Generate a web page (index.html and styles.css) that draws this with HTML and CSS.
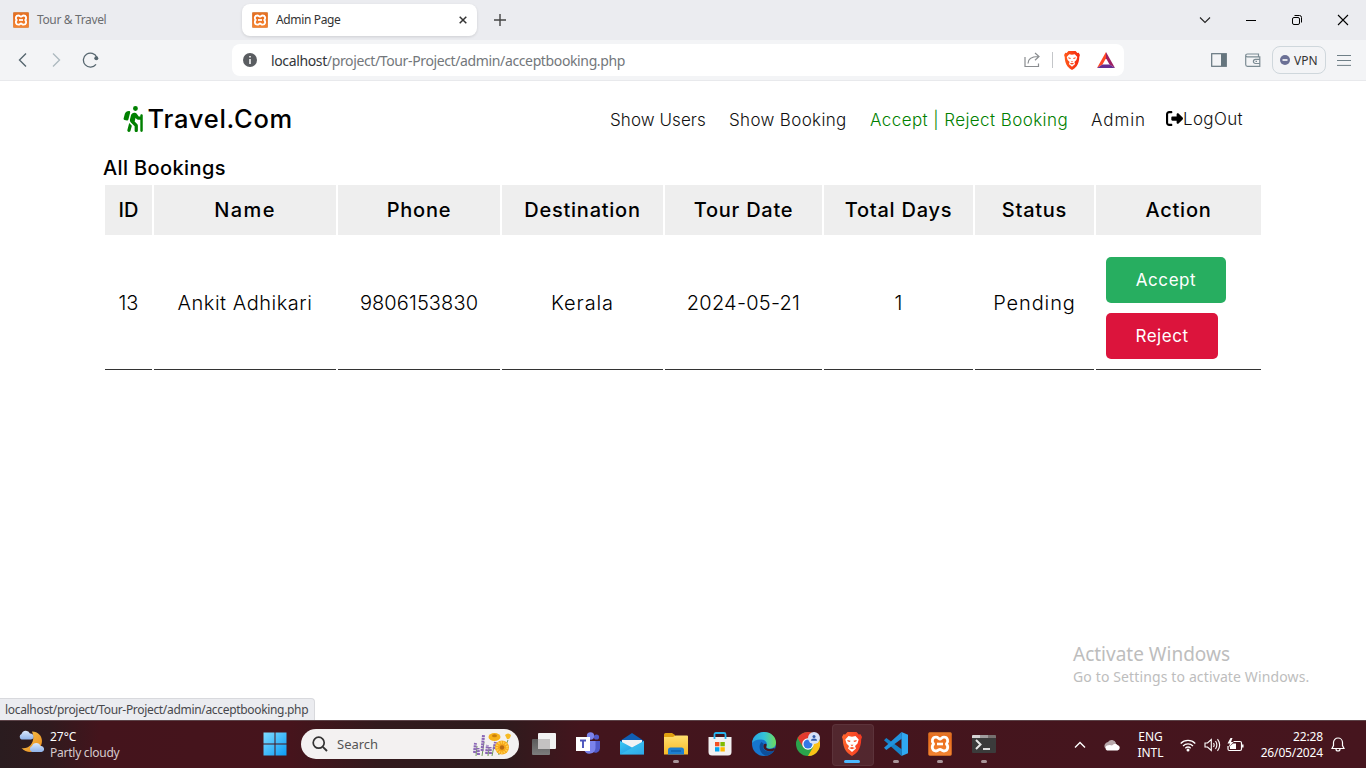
FILE: index.html
```html
<!DOCTYPE html>
<html lang="en">
<head>
<meta charset="utf-8">
<title>Admin Page</title>
<link rel="stylesheet" href="styles.css">
</head>
<body>
<svg class="defs" width="0" height="0">
  <defs>
    <linearGradient id="gOrange" x1="0" y1="0" x2="0" y2="1"><stop offset="0" stop-color="#e07a30"/><stop offset=".2" stop-color="#e96a1a"/><stop offset="1" stop-color="#f58634"/></linearGradient>
    <linearGradient id="gWin" x1="0" y1="0" x2="1" y2="1"><stop offset="0" stop-color="#7fdcff"/><stop offset="1" stop-color="#0a9bf5"/></linearGradient>
    <linearGradient id="gBrave" x1="0" y1="0" x2="1" y2="0"><stop offset="0" stop-color="#ff5a1c"/><stop offset="1" stop-color="#f5280f"/></linearGradient>
    <linearGradient id="gMoon" x1="0" y1="0" x2="1" y2="1"><stop offset="0" stop-color="#f7c64b"/><stop offset="1" stop-color="#ea8a1f"/></linearGradient>
    <linearGradient id="gCloud" x1="0" y1="0" x2="0" y2="1"><stop offset="0" stop-color="#dbe8fb"/><stop offset="1" stop-color="#8fb3ea"/></linearGradient>
    <linearGradient id="gEdge" x1="0" y1="0" x2="1" y2="0"><stop offset="0" stop-color="#2aa5e0"/><stop offset=".5" stop-color="#33c3d8"/><stop offset="1" stop-color="#6fdc5a"/></linearGradient>
    <linearGradient id="gFolder" x1="0" y1="0" x2="0" y2="1"><stop offset="0" stop-color="#ffdf6e"/><stop offset="1" stop-color="#f7b928"/></linearGradient>
    <linearGradient id="gMail" x1="0" y1="0" x2="1" y2="1"><stop offset="0" stop-color="#3ccbf4"/><stop offset="1" stop-color="#1a86dd"/></linearGradient>
    <linearGradient id="gGrey" x1="0" y1="0" x2="0" y2="1"><stop offset="0" stop-color="#5a5a5a"/><stop offset="1" stop-color="#7d7d7d"/></linearGradient>
    <symbol id="xampp" viewBox="0 0 24 24">
      <rect x=".3" y=".3" width="23.400" height="23.400" rx="2" fill="url(#gOrange)" stroke="#c8641f" stroke-width=".6"/>
      <path d="M8 5.200C4.200 5.200 3.200 9.500 5.600 12C3.200 14.500 4.200 19 8 19C10.300 19 10.800 17.300 12 17.300S13.700 19 16 19C19.800 19 20.800 14.500 18.400 12C20.800 9.500 19.800 5.200 16 5.200C13.700 5.200 13.200 7 12 7S10.300 5.200 8 5.200Z" fill="none" stroke="#fff" stroke-width="2.800" stroke-linejoin="round"/>
      <path d="M9 12H15" stroke="#fff" stroke-width="2.600"/>
    </symbol>
    <symbol id="brave" viewBox="0 0 20 24">
      <path d="M5.500 0H14.500L16.800 2.500L18.500 2.300L20 5L19.200 7.500C19.200 12 18 16 15.800 19.200C14 21.300 12 22.800 10 24C8 22.800 6 21.300 4.200 19.200C2 16 .8 12 .8 7.500L0 5L1.500 2.300L3.200 2.500Z" fill="url(#gBrave)"/>
      <path d="M6.500 4L10 4.700L13.500 4L16.700 7.500L15.500 11.500L13 14L14 16.500L10 20L6 16.500L7 14L4.500 11.500L3.300 7.500Z" fill="#fff"/>
      <path d="M5.200 8L8.500 8.700L8 10L5.800 9.600ZM14.800 8L11.500 8.700L12 10L14.200 9.600ZM8.500 12.800H11.500L10 14.200ZM7 16L10 14.900L13 16L10 17.200Z" fill="#fb4818"/>
    </symbol>
  </defs>
</svg>

<header class="browser">
  <div class="tabstrip">
    <div class="tab">
      <svg class="fav" width="16" height="16"><use href="#xampp"/></svg>
      <span class="t tab-title muted">Tour &amp; Travel</span>
    </div>
    <div class="tab active">
      <svg class="fav" width="16" height="16"><use href="#xampp"/></svg>
      <span class="t tab-title">Admin Page</span>
      <svg class="tab-close" width="8" height="8" viewBox="0 0 8 8"><path d="M.7 .7L7.300 7.300M7.300 .7L.7 7.300" stroke="#333" stroke-width="1.500"/></svg>
    </div>
    <svg class="newtab" width="12" height="12" viewBox="0 0 12 12"><path d="M6 0V12M0 6H12" stroke="#444" stroke-width="1.400"/></svg>
    <div class="winctl">
      <svg width="12" height="12" viewBox="0 0 12 12"><path d="M1 3.500L6 8.500L11 3.500" fill="none" stroke="#222" stroke-width="1.100"/></svg>
      <svg width="12" height="12" viewBox="0 0 12 12"><path d="M1 6.500H11" stroke="#000" stroke-width="1"/></svg>
      <svg width="12" height="12" viewBox="0 0 12 12"><rect x="1.500" y="3.500" width="7" height="7" rx="1.500" fill="none" stroke="#000"/><path d="M3.500 1.500H8.500Q10.500 1.500 10.500 3.500V8.500" fill="none" stroke="#000"/></svg>
      <svg width="12" height="12" viewBox="0 0 12 12"><path d="M1 1L11 11M11 1L1 11" stroke="#000" stroke-width="1.100"/></svg>
    </div>
  </div>
  <div class="toolbar">
    <div class="navbtns">
      <svg width="16" height="16" viewBox="0 0 16 16"><path d="M11 1.500L4.500 8L11 14.500" fill="none" stroke="#56666f" stroke-width="1.400"/></svg>
      <svg width="16" height="16" viewBox="0 0 16 16"><path d="M5 1.500L11.500 8L5 14.500" fill="none" stroke="#aebac0" stroke-width="1.400"/></svg>
      <svg width="18" height="16" viewBox="-1 0 18 16"><path d="M14.800 5.200A7 7 0 1 0 14 12.300" fill="none" stroke="#56666f" stroke-width="1.300"/><circle cx="14.300" cy="6.300" r="2" fill="#56666f"/></svg>
    </div>
    <div class="omnibox">
      <svg class="info" width="14" height="14" viewBox="0 0 14 14"><circle cx="7" cy="7" r="7" fill="#5a5d61"/><path d="M7 3V4.600M7 6V11" stroke="#fff" stroke-width="1.500"/></svg>
      <span class="t url"><b>localhost</b>/project/Tour-Project/admin/acceptbooking.php</span>
      <svg width="17" height="16" viewBox="0 0 17 16"><path d="M1 5V14.500H14.500V11.500M4 11.500C4 7 7.500 4.500 14 4.500M11 1L15 4.500L11 8.200" fill="none" stroke="#8a8d90" stroke-width="1.200"/></svg>
      <i class="sep"></i>
      <svg width="16" height="19"><use href="#brave"/></svg>
      <svg class="bat" width="18" height="16" viewBox="0 0 18 16"><path d="M9 0L0 16L5.500 12.500L9 6.200Z" fill="#ff4724"/><path d="M9 0L18 16L12.500 12.500L9 6.200Z" fill="#9e1f63"/><path d="M0 16H18L12.500 12.500H5.500Z" fill="#662d91"/></svg>
    </div>
    <div class="actions">
      <svg width="16" height="14" viewBox="0 0 16 14"><rect x=".7" y=".7" width="14.600" height="12.600" fill="none" stroke="#65757e" stroke-width="1.200"/><rect x="10" y="1" width="5" height="12" fill="#65757e"/></svg>
      <svg width="16" height="14" viewBox="0 0 16 14"><path d="M13.500 3.500V1H2.500Q.7 1 .7 2.500V11.500Q.7 13.300 2.500 13.300H14.800V3.800H2.500Q.7 3.800 .7 2.500M14.800 6.300H10.500A2 2 0 0 0 10.500 10.500H14.800" fill="none" stroke="#7b8b93" stroke-width="1.200"/><path d="M10.500 8.400H12" stroke="#7b8b93" stroke-width="1.200"/></svg>
      <div class="vpn"><svg width="10" height="10" viewBox="0 0 10 10"><circle cx="5" cy="5" r="5" fill="#6b7095"/><path d="M2.500 5H7.500" stroke="#fff" stroke-width="1.600"/></svg><span class="t">VPN</span></div>
      <svg width="14" height="12" viewBox="0 0 14 12"><path d="M0 1.500H14M0 6.500H14M0 11.400H14" stroke="#6f7f87" stroke-width="1"/></svg>
    </div>
  </div>
</header>

<main class="page">
  <nav class="site-nav">
    <a class="brand"><svg width="20" height="26" viewBox="0 0 384 512"><path fill="green" d="M192 48a48 48 0 1 1 96 0 48 48 0 1 1 -96 0zm51.300 182.700L224.200 307l49.700 49.700c9 9 14.100 21.200 14.100 33.900V480c0 17.700-14.300 32-32 32s-32-14.300-32-32V397.300l-73.900-73.900c-15.800-15.800-22.200-38.600-16.900-60.300l20.400-84c8.300-34.100 42.700-54.900 76.700-46.400c19 4.800 35.600 16.400 46.400 32.700L305.100 208H336V184c0-13.300 10.700-24 24-24s24 10.700 24 24V488c0 13.300-10.700 24-24 24s-24-10.700-24-24V272H296.600c-16 0-31-8-39.900-21.400l-13.300-20zM81.100 471.900L117.300 334c3 4.200 6.400 8.200 10.100 11.900l41.900 41.900L142.900 488.100c-4.500 17.100-22 27.300-39.100 22.800s-27.300-22-22.800-39.100zm55.500-346L101.400 266.500c-3 12.100-14.900 19.900-27.200 17.900l-47.900-8c-14-2.300-22.900-16.300-19.200-30L31.900 155c9.500-34.800 41.100-59 77.200-59h4.200c15.600 0 27.100 14.700 23.300 29.800z"/></svg><span class="t">Travel.Com</span></a>
    <div class="links">
      <a class="t w-users">Show Users</a>
      <a class="t w-book">Show Booking</a>
      <a class="t w-accept current">Accept | Reject Booking</a>
      <a class="t w-admin">Admin</a>
    </div>
    <a class="logout"><svg width="17" height="17" viewBox="0 0 512 512"><path d="M377.900 105.900L500.700 228.700c7.200 7.200 11.300 17.100 11.300 27.300s-4.100 20.100-11.300 27.300L377.900 406.100c-6.400 6.400-15 9.900-24 9.900c-18.700 0-33.900-15.200-33.900-33.900l0-62.100-128 0c-17.700 0-32-14.300-32-32l0-64c0-17.700 14.300-32 32-32l128 0 0-62.100c0-18.700 15.200-33.900 33.900-33.900c9 0 17.600 3.600 24 9.900zM160 96L96 96c-17.700 0-32 14.300-32 32l0 256c0 17.700 14.300 32 32 32l64 0c17.700 0 32 14.300 32 32s-14.300 32-32 32l-64 0c-53 0-96-43-96-96L0 128C0 75 43 32 96 32l64 0c17.700 0 32 14.300 32 32s-14.300 32-32 32z"/></svg><span class="t">LogOut</span></a>
  </nav>
  <section class="bookings">
    <h1><span class="t">All Bookings</span></h1>
    <table>
      <colgroup><col class="c1"><col class="c2"><col class="c3"><col class="c4"><col class="c5"><col class="c6"><col class="c7"><col class="c8"></colgroup>
      <thead><tr><th class="id">ID</th><th class="name">Name</th><th>Phone</th><th>Destination</th><th>Tour Date</th><th>Total Days</th><th>Status</th><th>Action</th></tr></thead>
      <tbody><tr><td class="num">13</td><td>Ankit Adhikari</td><td class="num">9806153830</td><td class="wide">Kerala</td><td class="date">2024-05-21</td><td class="num">1</td><td class="wide">Pending</td>
      <td class="act"><div class="btns"><a class="btn accept">Accept</a><a class="btn reject">Reject</a></div></td></tr></tbody>
    </table>
  </section>
  <div class="activate"><p class="big">Activate Windows</p><p>Go to Settings to activate Windows.</p></div>
  <div class="status"><span class="t">localhost/project/Tour-Project/admin/acceptbooking.php</span></div>
</main>

<footer class="taskbar">
  <div class="weather">
    <svg width="26" height="24" viewBox="0 0 26 24"><path d="M14 1.500C22 1.500 26 9 23 15.500C20 22.500 9 24.500 3.500 18C12 19.500 18 11 14 1.500Z" fill="url(#gMoon)"/><path d="M3.500 9.500A3 3 0 0 1 3.500 4A4.500 4.500 0 0 1 12 3.500A3 3 0 0 1 13 9.500Z" fill="url(#gCloud)"/><path d="M14 22A3.200 3.200 0 0 1 14 16A4.500 4.500 0 0 1 22.500 16A3 3 0 0 1 23.500 22Z" fill="url(#gCloud)"/></svg>
    <div><span class="t temp">27°C</span><span class="t cond">Partly cloudy</span></div>
  </div>
  <div class="apps">
    <span class="app"><svg width="24" height="24" viewBox="0 0 24 24"><path d="M.5 .5H11.500V11.500H.5ZM12.500 .5H23.500V11.500H12.500ZM.5 12.500H11.500V23.500H.5ZM12.500 12.500H23.500V23.500H12.500Z" fill="url(#gWin)"/></svg></span>
    <div class="search">
      <svg width="16" height="16" viewBox="0 0 16 16"><circle cx="6.700" cy="6.700" r="5.500" fill="none" stroke="#333" stroke-width="1.700"/><path d="M10.800 10.800L15 15" stroke="#333" stroke-width="1.900"/></svg>
      <span class="t">Search</span>
      <svg class="flowers" width="40" height="24" viewBox="0 0 40 24"><path d="M4 24L5 14M10 24L12 10M16 24L17 16M20 24L22 14M27 23L25 12M36 8L32 18" stroke="#6f9a5b" stroke-width="1" fill="none"/><path d="M2.500 21L3.500 11M6.500 23L6 16M10 19L11.500 3M14.500 22L15.500 13M18.500 22L18 15M22 17L23.500 10" stroke="#8a66b5" stroke-width="3" stroke-dasharray="2 .8" fill="none"/><ellipse cx="22.500" cy="5" rx="6" ry="4" fill="#f6b21b"/><ellipse cx="22.500" cy="3.800" rx="2.500" ry="1.500" fill="#c97e0b"/><circle cx="30" cy="15.500" r="7" fill="#f7a81b"/><circle cx="30" cy="15.500" r="5.200" fill="none" stroke="#ffd04a" stroke-width="2.400" stroke-dasharray="1.300 1.200"/><circle cx="30" cy="15.500" r="2.200" fill="#b96a10"/><path d="M33 3Q36 0 39 3Q38 8 35 7Z" fill="#f7bb25"/></svg>
    </div>
    <span class="app"><svg width="24" height="24" viewBox="0 0 24 24"><rect y="7" width="18" height="16" rx="1" fill="url(#gGrey)"/><rect x="6" y="1" width="18" height="16" rx="1" fill="#f2f2f2"/><path d="M6 7H18V17H6Z" fill="#c4c2c2"/></svg></span>
    <span class="app"><svg width="24" height="24" viewBox="0 0 24 24"><circle cx="20.500" cy="5" r="2.600" fill="#5059c9"/><circle cx="14.500" cy="4" r="3.700" fill="#7b83eb"/><path d="M16 9H24V16A4.500 4.500 0 0 1 16 19Z" fill="#5059c9"/><path d="M8 9H19.500V16A6 6 0 0 1 8 18Z" fill="#7b83eb"/><rect y="5" width="14" height="14" fill="#fff"/><path d="M4 8.500H10M7 8.500V16" stroke="#4b53bc" stroke-width="1.900"/></svg></span>
    <span class="app"><svg width="24" height="24" viewBox="0 0 24 24"><path d="M0 9L12 1L24 9V14H0Z" fill="#0f5fb4"/><path d="M2 8H22V15L12 17L2 15Z" fill="#f2f2f4"/><path d="M0 9V22.500H24V9L12 15.500Z" fill="url(#gMail)"/><path d="M0 22.500L24 9V22.500Z" fill="#46d0f5" opacity=".45"/></svg></span>
    <span class="app run"><svg width="24" height="24" viewBox="0 0 24 24"><path d="M0 2.500Q0 1 1.500 1H8L11 3V8H0Z" fill="#e0a010"/><path d="M0 5H9L11.500 3.500H23Q24 3.500 24 4.500V22.500H0Z" fill="url(#gFolder)"/><path d="M4 22.500V18Q4 15.500 6.500 15.500H17.500Q20 15.500 20 18V22.500Z" fill="#1d7fd0"/><path d="M7 19H17" stroke="#0c5ba6" stroke-width="1.200"/></svg></span>
    <span class="app"><svg width="24" height="24" viewBox="0 0 24 24"><path d="M.5 5H23.500V20Q23.500 23.500 20 23.500H4Q.5 23.500 .5 20Z" fill="#f1f0f1"/><path d="M6.500 7V2.500Q6.500 1 8 1H16Q17.500 1 17.500 2.500V7" fill="none" stroke="#27b3ee" stroke-width="1.800"/><path d="M7 10H11.400V14.300H7Z" fill="#f25022"/><path d="M12.400 10H16.800V14.300H12.400Z" fill="#7fba00"/><path d="M7 15.200H11.400V19.500H7Z" fill="#00a4ef"/><path d="M12.400 15.200H16.800V19.500H12.400Z" fill="#ffb900"/></svg></span>
    <span class="app"><svg width="24" height="24" viewBox="0 0 24 24"><circle cx="12" cy="12" r="12" fill="#1676cf"/><path d="M0 11C1 4 6 0 12 0C19 0 24 5 24 10.500C24 15 20.500 16.500 17.500 16.500C14.500 16.500 13.500 15.500 14.500 14C15.500 12 14.500 8 9.500 7.500C5 7 1.500 9 0 11Z" fill="url(#gEdge)"/><path d="M9.500 10C5.500 14 8 22 14 23.800C18 23.300 21 21 22.500 18.500C18 20.500 12 19.500 11 15.500C10.600 13.500 11.300 12.500 12 12Z" fill="#0d4f9b"/><path d="M14.500 14C13 17 18 18 22.500 16L23 18C19 20.500 12.500 19 11.500 15.500C11 13 12 11 14.500 12Z" fill="#451720"/></svg></span>
    <span class="app"><svg width="24" height="24" viewBox="0 0 24 24"><circle cx="12" cy="12" r="12" fill="#2ba24c"/><path d="M1.600 6A12 12 0 0 1 22.400 6H12L7 15Z" fill="#e33b2e"/><path d="M22.400 6A12 12 0 0 1 12 24L17.200 15L17 6Z" fill="#fbc116"/><circle cx="12" cy="12" r="5.800" fill="#fff"/><circle cx="12" cy="12" r="4.500" fill="#3478e5"/><circle cx="18" cy="6" r="6" fill="#d6e2f8"/><circle cx="18" cy="4.500" r="1.500" fill="#315ba8"/><path d="M15 8.800Q15 6.500 18 6.500T21 8.800Z" fill="#315ba8"/></svg></span>
    <span class="app focus"><svg width="20" height="24"><use href="#brave"/></svg></span>
    <span class="app run"><svg width="24" height="24" viewBox="0 0 24 24"><path d="M17.500 0L24 2.800V21.200L17.500 24Z" fill="#2fa8f0"/><path d="M17.500 24L0 8.300L2.300 6L18 17.500Z" fill="#1681c8"/><path d="M17.500 0L0 15.700L2.300 18L18 6.500Z" fill="#2192dd"/></svg></span>
    <span class="app run"><svg width="24" height="24"><use href="#xampp"/></svg></span>
    <span class="app run"><svg width="24" height="24" viewBox="0 0 24 24"><rect y="3" width="24" height="18" rx="1" fill="#3b3b3b"/><path d="M0 6V4Q0 3 1 3H8V6Z" fill="#d5d3d3"/><path d="M8 3H16V6H8Z" fill="#a09c9d"/><path d="M16 3H23Q24 3 24 4V6H16Z" fill="#77706f"/><path d="M4 8L8.500 12.500L4 17" fill="none" stroke="#e8e8e8" stroke-width="2"/><path d="M11 17H18" stroke="#f2f2f2" stroke-width="1.800"/></svg></span>
  </div>
  <div class="tray">
    <svg class="chev" width="12" height="8" viewBox="0 0 12 8"><path d="M1 6.500L6 1.500L11 6.500" fill="none" stroke="#fff" stroke-width="1.400"/></svg>
    <svg class="cloud" width="16" height="12" viewBox="0 0 16 12"><path d="M1 9A4 4 0 0 1 4 3A4.500 4.500 0 0 1 12 4L10 9Z" fill="#b8a9ac"/><path d="M3 11.500A2.800 2.800 0 0 1 3 6.500Q6 5.500 8 6.500Q11 3.500 13.500 6A2.800 2.800 0 0 1 13.500 11.500Z" fill="#fff"/></svg>
    <div class="lang"><span class="t">ENG</span><span class="t">INTL</span></div>
    <svg class="wifi" width="16" height="14" viewBox="0 0 16 14"><path d="M.7 5.500A10.300 10.300 0 0 1 15.300 5.500M3 8A7.100 7.100 0 0 1 13 8M5.300 10.300A3.900 3.900 0 0 1 10.700 10.300" fill="none" stroke="#fff" stroke-width="1.200"/><circle cx="8" cy="12" r="1.500" fill="#fff"/></svg>
    <svg class="vol" width="17" height="14" viewBox="0 0 17 14"><path d="M1 5H3.500L7.300 1.500V12.500L3.500 9H1ZM9.500 5Q10.800 7 9.500 9M11.500 3Q14.200 7 11.500 11M13.500 1.200Q17.800 7 13.500 12.800" fill="none" stroke="#fff" stroke-width="1.100"/></svg>
    <svg class="batt" width="17" height="14" viewBox="0 0 17 14"><path d="M6.500 3.500H13Q14.500 3.500 14.500 5V11Q14.500 12.500 13 12.500H2.500Q1 12.500 1 11V8" fill="none" stroke="#fff" stroke-width="1.200"/><path d="M3 8L6 5.500H9V11H3Z" fill="#fff"/><path d="M15.800 6.500V9.500" stroke="#fff" stroke-width="1.500"/><path d="M3.500 0L.5 5.500H3L1.500 9.500L6.500 4H4L5.500 0Z" fill="#fff"/></svg>
    <div class="clock"><span class="t">22:28</span><span class="t">26/05/2024</span></div>
    <svg class="bell" width="14" height="15" viewBox="0 0 14 15"><path d="M1 11.500L2.500 8.500V5.500A4.500 4.500 0 0 1 11.500 5.500V8.500L13 11.500ZM5 12A2 2 0 0 0 9 12" fill="none" stroke="#fff" stroke-width="1.200"/></svg>
  </div>
</footer>
</body>
</html>
```
FILE: styles.css
```css
* { box-sizing: border-box; }
body { margin: 0; width: 1366px; height: 768px; overflow: hidden; background: #fff; font-family: "Noto Sans", sans-serif; display: flex; flex-direction: column; }
svg { display: block; flex: none; }
.defs { position: absolute; }
.t, th, td, .activate p { white-space: nowrap; }
.tabstrip { height: 40px; background: #ebecf0; display: flex; align-items: center; padding-left: 5px; }
.tab { width: 236px; height: 32px; display: flex; align-items: center; padding: 0 10px 0 8px; border-radius: 8px; }
.tab.active { margin-left: 1px; width: 235px; background: #fff; padding-left: 10px; box-shadow: 0 1px 3px rgba(0, 0, 0, .12); }
.tab-title { margin-left: 8px; flex: 1; font-size: 12px; line-height: 18px; color: #333; letter-spacing: -.36px; }
.muted { color: #6b6d70; }
.newtab { margin-left: 17px; }
.winctl { margin-left: auto; display: flex; gap: 34px; padding-right: 17px; }
.toolbar { height: 41px; background: #f3f4f6; border-bottom: 1px solid #e8e9ec; display: flex; align-items: center; }
.navbtns { width: 232px; display: flex; gap: 17px; padding-left: 15px; }
.omnibox { width: 892px; height: 32px; background: #fff; border-radius: 8px; display: flex; align-items: center; padding: 0 9px 0 11px; }
.url { flex: 1; margin-left: 14px; font-size: 14px; letter-spacing: -.37px; color: #73777b; }
.url b { font-weight: 400; color: #33363a; }
.sep { width: 1px; height: 16px; background: #c4c6c9; margin: 0 11px; }
.bat { margin-left: 17px; }
.actions { flex: 1; display: flex; align-items: center; padding-left: 87px; }
.actions > svg + svg { margin-left: 18px; }
.actions > .vpn + svg { margin-left: 0; }
.vpn { width: 54px; height: 28px; margin: 0 11px; border: 1px solid #cfd7dc; border-radius: 8px; display: flex; align-items: center; gap: 4px; padding-left: 7px; font-size: 12px; color: #333; }

.page { height: 639px; position: relative; font-family: Inter, "Open Sans", sans-serif; }
.site-nav { height: 77px; padding-left: 122.5px; display: flex; align-items: center; color: #111; }
.brand { display: flex; align-items: center; gap: 5px; width: 487.5px; height: 32px; margin-top: -2px; font-size: 25.5px; font-weight: 500; letter-spacing: .75px; color: #000; }
.links { display: flex; gap: 23px; font-size: 17px; font-weight: 300; }
.w-users { width: 96px; letter-spacing: .07px; }
.w-book { width: 118px; letter-spacing: .34px; }
.w-accept { width: 198px; letter-spacing: .42px; }
.w-admin { width: 55px; letter-spacing: .9px; }
.current { color: green; }
.logout { margin: -2px 0 0 20px; display: flex; align-items: center; font-size: 17px; font-weight: 300; letter-spacing: .35px; }
.bookings { padding-left: 103px; }
h1 { margin: 0; height: 25px; font-size: 20px; line-height: 20px; font-weight: 500; letter-spacing: .38px; }
table { width: 1160px; table-layout: fixed; border-spacing: 2px; border-collapse: separate; font-size: 20px; color: #000; }
.c1 { width: 47px; }
.c2 { width: 182px; }
.c3 { width: 162px; }
.c4 { width: 161px; }
.c5 { width: 157px; }
.c6 { width: 149px; }
.c7 { width: 119px; }
.c8 { width: 165px; }
th { height: 50px; padding: 0; background: #eee; font-weight: 500; letter-spacing: .75px; }
th.id { letter-spacing: 0; }
th.name { letter-spacing: 1.4px; }
td { height: 133px; padding: 0; text-align: center; font-weight: 300; letter-spacing: .53px; border-bottom: 1px solid #333; }
td.num { letter-spacing: .1px; }
td.date { letter-spacing: .25px; }
td.wide { letter-spacing: .9px; }
.btns { display: flex; flex-direction: column; align-items: flex-start; gap: 10px; padding: 10px 0 0 10px; }
.btn { height: 46px; border-radius: 5px; color: #fff; font-size: 17px; font-weight: 400; line-height: 46px; text-align: center; letter-spacing: .55px; }
.accept { width: 120px; background: #27ae60; }
.reject { width: 112px; background: #dc143c; }
.activate { position: absolute; left: 1073px; top: 561px; font-family: "Noto Sans", sans-serif; color: #bdbdbd; font-size: 14px; letter-spacing: .13px; }
.activate p { margin: 0; line-height: 20px; }
.activate .big { font-size: 19px; line-height: 25px; letter-spacing: 0; }
.status { position: absolute; left: 0; bottom: 0; width: 315px; height: 22px; background: #ebecf0; border: 1px solid #d8d9dd; border-width: 1px 1px 0 0; border-radius: 0 4px 0 0; padding-left: 5px; line-height: 22px; font-family: "Noto Sans", sans-serif; font-size: 12px; letter-spacing: -.32px; color: #47484c; }

.taskbar { height: 48px; display: flex; align-items: center; border-top: 1px solid #5c4348; background: linear-gradient(90deg, #2a1c1f 0, #301a1e 50px, #44141c 100px, #46141c 290px, #321a1d 380px, #2e1b1d 500px, #43151d 580px, #46151e 100%); color: #fff; font-size: 12px; }
.weather { width: 244px; padding-left: 18px; display: flex; align-items: center; gap: 6px; }
.weather > svg { margin-top: -6px; }
.weather span, .lang span, .clock span { display: block; line-height: 16px; }
.cond { color: #d6cbcd; letter-spacing: -.25px; }
.apps { display: flex; align-items: center; height: 47px; width: 772px; padding-left: 9px; }
.app { width: 44px; height: 45px; margin-bottom: 2px; flex: none; display: flex; align-items: center; justify-content: center; position: relative; }
.search { margin: 0 3px 2px 4px; flex: none; width: 218px; height: 30px; border-radius: 15px; background: #f3f1f1; display: flex; align-items: center; padding: 0 7px 0 11px; color: #555; font-size: 13px; }
.search span { margin-left: 9px; flex: 1; }
.run::after, .focus::after { content: ""; position: absolute; bottom: 3px; left: 19px; width: 6px; height: 3px; border-radius: 2px; background: #a99599; }
.focus::after { left: 14px; width: 16px; background: #4cb8ff; }
.focus::before { content: ""; position: absolute; left: 2px; top: 3px; width: 40px; height: 40px; border-radius: 4px; background: rgba(255, 255, 255, .08); border: 1px solid rgba(255, 255, 255, .06); }
.tray { display: flex; align-items: center; padding-left: 58px; }
.cloud { margin-left: 18px; }
.lang { width: 40px; margin-left: 10.5px; text-align: center; }
.wifi { margin-left: 9.5px; }
.vol { margin-left: 8px; }
.batt { margin-left: 6px; }
.clock { width: 64px; margin-left: 15px; text-align: right; letter-spacing: -.15px; }
.bell { margin-left: 8px; }
```
